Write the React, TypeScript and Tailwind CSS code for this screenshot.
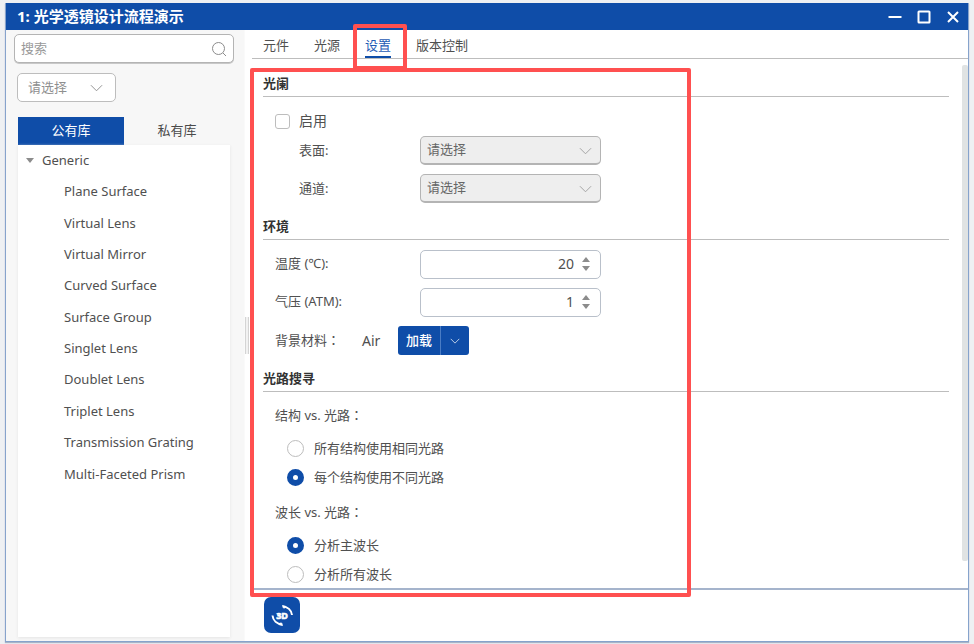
import { useState } from "react";
import type { ReactNode } from "react";

const LIBRARY_ITEMS = [
  "Plane Surface",
  "Virtual Lens",
  "Virtual Mirror",
  "Curved Surface",
  "Surface Group",
  "Singlet Lens",
  "Doublet Lens",
  "Triplet Lens",
  "Transmission Grating",
  "Multi-Faceted Prism",
];

const TABS = ["元件", "光源", "设置", "版本控制"];

function Chevron({ className }: { className: string }) {
  return (
    <svg viewBox="0 0 14 8" fill="none" stroke="currentColor" className={className} aria-hidden="true">
      <path d="M1 1l6 6 6-6" />
    </svg>
  );
}

// Full-width colon, centred in its em box as in the TC glyph set.
function Colon() {
  return <span className="font-['Noto_Sans_CJK_TC',sans-serif]" lang="zh-TW">：</span>;
}

function TitleBar() {
  return (
    <header className="flex h-[27px] shrink-0 items-center bg-[#0f4da8] pl-[11px] pr-2 text-white">
      <h1 className="flex-1 text-[15px] font-bold">1: 光学透镜设计流程演示</h1>
      <div className="flex gap-[15px]">
        <button aria-label="最小化" className="h-[14px] w-[14px]">
          <svg viewBox="0 0 14 14" stroke="currentColor" strokeWidth="2"><path d="M0.5 7h13" /></svg>
        </button>
        <button aria-label="最大化" className="h-[14px] w-[14px]">
          <svg viewBox="0 0 14 14" fill="none" stroke="currentColor" strokeWidth="2"><rect x="1.5" y="1.5" width="11" height="11" rx="0.5" /></svg>
        </button>
        <button aria-label="关闭" className="h-[14px] w-[14px]">
          <svg viewBox="0 0 14 14" stroke="currentColor" strokeWidth="2"><path d="M2 2l10 10M12 2L2 12" /></svg>
        </button>
      </div>
    </header>
  );
}

function Sidebar() {
  return (
    <aside className="flex w-[238px] shrink-0 flex-col bg-[#f7f7f7] pb-1 pt-1">
      <div className="ml-2 mr-[10px] flex h-[29px] items-center rounded-[5px] border border-[#b4b4b4] bg-white px-[6px] shadow-[0_1px_0_#c8c8c8]">
        <input aria-label="搜索" placeholder="搜索" className="min-w-0 flex-1 bg-transparent outline-none placeholder:text-[#999]" />
        <svg viewBox="0 0 16 16" fill="none" stroke="#8c8c8c" className="h-4 w-4" aria-hidden="true">
          <circle cx="7.5" cy="7.5" r="6" />
          <path d="M12 12l3 3" />
        </svg>
      </div>
      <div className="relative ml-[11px] mt-[10px] w-[99px]">
        <select aria-label="库筛选" className="h-[29px] w-full appearance-none rounded-[5px] border border-[#bdbdbd] bg-white pl-[10px] text-[#8f8f8f] outline-none">
          <option>请选择</option>
        </select>
        <Chevron className="pointer-events-none absolute right-[13px] top-[11px] h-[8px] w-[13px] text-[#8c8c8c]" />
      </div>
      <div className="ml-3 mr-[14px] mt-[15px] flex flex-1 flex-col">
        <div className="flex h-7" role="tablist">
          <button role="tab" aria-selected="true" className="flex-1 bg-[#0f4da8] text-white">公有库</button>
          <button role="tab" aria-selected="false" className="flex-1 text-[#4a4a4a]">私有库</button>
        </div>
        <div className="flex-1 bg-white shadow-[0_1px_3px_#e4e4e4]">
          <ul className="grid h-[345px] auto-rows-fr text-[#505050]">
            <li className="flex items-center pl-2">
              <span className="h-0 w-0 border-x-4 border-t-[5px] border-x-transparent border-t-[#8c8c8c]" />
              <span className="ml-2">Generic</span>
            </li>
            {LIBRARY_ITEMS.map((name) => (
              <li key={name} className="flex items-center pl-[46px]">{name}</li>
            ))}
          </ul>
        </div>
      </div>
    </aside>
  );
}

function SectionTitle({ children }: { children: ReactNode }) {
  return <h2 className="h-[26px] border-b border-[#bdbdbd] font-bold leading-[24px] text-[#333]">{children}</h2>;
}

function DisabledSelect({ id, label }: { id: string; label: string }) {
  return (
    <div className="flex h-[29px] items-center pl-9">
      <label htmlFor={id} className="w-[121px]">{label}</label>
      <div className="relative w-[181px]">
        <select id={id} disabled className="h-[29px] w-full appearance-none rounded-[5px] border border-b-2 border-[#b4b4b4] bg-[#eeeeee] pl-[6px] text-[#666] opacity-100">
          <option>请选择</option>
        </select>
        <Chevron className="pointer-events-none absolute right-[9px] top-[11px] h-[8px] w-[13px] text-[#a0a0a0]" />
      </div>
    </div>
  );
}

function SpinField({ id, label, initial }: { id: string; label: string; initial: number }) {
  const [value, setValue] = useState(initial);
  return (
    <div className="flex h-[30px] items-center pl-3">
      <label htmlFor={id} className="w-[145px]">{label}</label>
      <div className="flex h-[29px] w-[181px] items-center rounded-[5px] border border-[#b9c0ca] bg-white pr-[10px]">
        <input
          id={id}
          inputMode="numeric"
          value={value}
          onChange={(e) => setValue(Number(e.target.value) || 0)}
          className="min-w-0 flex-1 bg-transparent text-right text-sm outline-none"
        />
        <div className="ml-2 flex flex-col gap-1">
          <button aria-label="增加" onClick={() => setValue(value + 1)} className="h-0 w-0 border-x-4 border-b-[5px] border-x-transparent border-b-[#8c8c8c]" />
          <button aria-label="减少" onClick={() => setValue(value - 1)} className="h-0 w-0 border-x-4 border-t-[5px] border-x-transparent border-t-[#8c8c8c]" />
        </div>
      </div>
    </div>
  );
}

function Radio({ name, label, checked }: { name: string; label: string; checked?: boolean }) {
  return (
    <label className="flex h-[29px] items-center gap-[10px] pl-6">
      <input
        type="radio"
        name={name}
        defaultChecked={checked}
        className="h-[17px] w-[17px] appearance-none rounded-full border border-[#bdbdbd] bg-white checked:border-[6px] checked:border-[#0f4da8]"
      />
      {label}
    </label>
  );
}

function Settings() {
  return (
    <div className="flex min-h-0 flex-1">
      <div className="min-w-0 flex-1 overflow-hidden pl-[11px] pr-[13px] pt-3 text-[#505050]">
        <section>
          <SectionTitle>光阑</SectionTitle>
          <label className="mt-[9px] flex h-[30px] items-center gap-[9px] pl-3 text-sm">
            <input type="checkbox" className="h-[15px] w-[15px] appearance-none rounded-[3px] border border-[#bdbdbd] bg-white checked:bg-[#0f4da8]" />
            启用
          </label>
          <div className="flex flex-col gap-[9px]">
            <DisabledSelect id="surface" label="表面:" />
            <DisabledSelect id="channel" label="通道:" />
          </div>
        </section>
        <section className="mt-[11px]">
          <SectionTitle>环境</SectionTitle>
          <div className="mt-[9px] flex flex-col gap-2">
            <SpinField id="temperature" label="温度 (℃):" initial={20} />
            <SpinField id="pressure" label="气压 (ATM):" initial={1} />
          </div>
          <div className="mt-[9px] flex h-[29px] items-center pl-3">
            <span className="w-[87px]">背景材料<Colon /></span>
            <span className="w-9 text-sm">Air</span>
            <div className="flex h-[29px] overflow-hidden rounded-[3px] bg-[#0f4da8] text-white">
              <button className="w-[43px] border-r border-[#4a7cc4] font-medium">加载</button>
              <button aria-label="更多加载选项" className="flex w-7 items-center justify-center">
                <Chevron className="h-[6px] w-[10px]" />
              </button>
            </div>
          </div>
        </section>
        <section className="mt-[11px]">
          <SectionTitle>光路搜寻</SectionTitle>
          <fieldset className="mt-[11px]">
            <legend className="h-[29px] pl-3 leading-[24px]">结构 vs. 光路<Colon /></legend>
            <div className="pt-[2px]">
              <Radio name="structure" label="所有结构使用相同光路" />
              <Radio name="structure" label="每个结构使用不同光路" checked />
            </div>
          </fieldset>
          <fieldset className="mt-2">
            <legend className="h-[29px] pl-3 leading-[24px]">波长 vs. 光路<Colon /></legend>
            <div className="pt-[2px]">
              <Radio name="wavelength" label="分析主波长" checked />
              <Radio name="wavelength" label="分析所有波长" />
            </div>
          </fieldset>
        </section>
      </div>
      <div className="mb-[27px] mt-[6px] w-[6px] rounded-[2px] bg-[#e0e3e3]" />
    </div>
  );
}

function View3DIcon() {
  return (
    <svg viewBox="0 0 24 24" fill="none" stroke="currentColor" strokeWidth="2" className="h-6 w-6" aria-hidden="true">
      <path d="M12.5 3.5C17.5 3.5 21.5 7 22 12" />
      <path d="M2.5 12.5C3 17.5 7 21 12.5 21.5" />
      <path d="M12 2l4 1-2 3zM13 23l-4-1 2-3z" fill="currentColor" stroke="none" />
      <text x="12" y="16" textAnchor="middle" fontSize="9" fontWeight="bold" fill="currentColor" strokeWidth="0.6">3D</text>
    </svg>
  );
}

export default function App() {
  return (
    <div className="h-screen bg-[#eef0f3] px-[5px] pb-[2px] pt-[3px] font-['Noto_Sans','Noto_Sans_CJK_SC',sans-serif] text-[13px]">
      <div className="relative flex h-full flex-col border border-t-0 border-[#86a3cc] bg-white shadow-[0_1px_1px_#a9b4c6]">
        <TitleBar />
        <div className="flex min-h-0 flex-1">
          <Sidebar />
          <div className="flex w-2 shrink-0 flex-col justify-center border-l border-[#fafafa]">
            <div className="h-[37px] w-1 border-x border-[#d4d4d4] bg-[#f2f2f2]" />
          </div>
          <main className="flex min-w-0 flex-1 flex-col">
            <nav className="flex h-[29px] shrink-0 items-end gap-[25px] border-b border-[#bdbdbd] pl-[11px] text-[#505050]" role="tablist">
              {TABS.map((tab) => (
                <button
                  key={tab}
                  role="tab"
                  aria-selected={tab === "设置"}
                  className="h-[22px] border-b-2 border-transparent aria-selected:border-[#0f4da8] aria-selected:text-[#1f5bb5]"
                >
                  {tab}
                </button>
              ))}
            </nav>
            <Settings />
            <footer className="flex h-[53px] shrink-0 border-t-2 border-[#a5b4cc] pl-3 pt-[7px]">
              <button aria-label="3D 视图" className="flex h-9 w-9 items-center justify-center rounded-[7px] bg-[#0f4da8] text-white">
                <View3DIcon />
              </button>
            </footer>
          </main>
        </div>
        <div className="pointer-events-none absolute left-[347px] top-[21px] h-[46px] w-[54px] rounded-[2px] border-4 border-[#ff5050]" />
        <div className="pointer-events-none absolute bottom-[44px] left-[244px] top-[65px] w-[441px] rounded-[2px] border-4 border-[#ff5050]" />
      </div>
    </div>
  );
}
